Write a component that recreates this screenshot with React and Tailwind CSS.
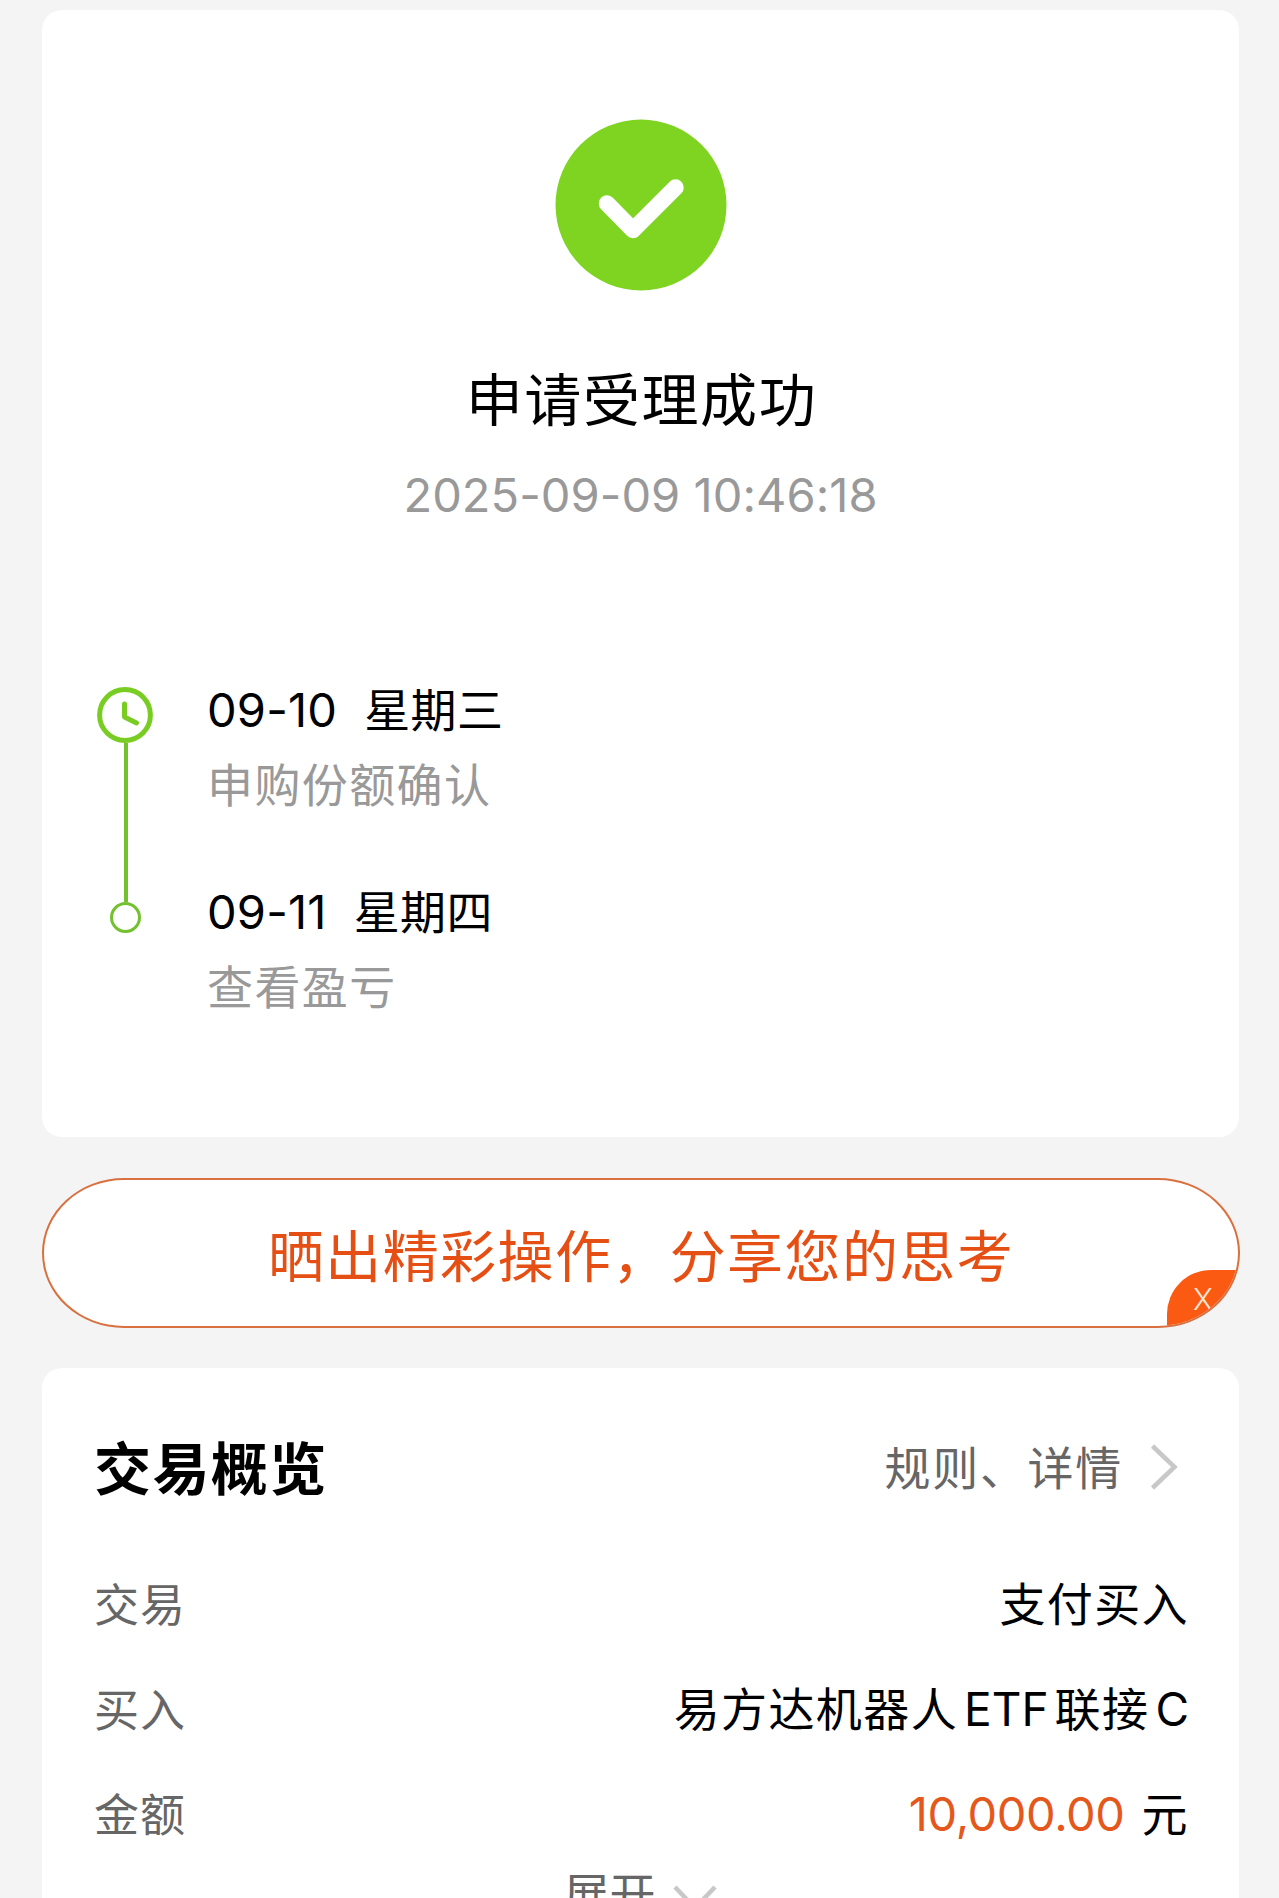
import React from "react";

const steps = [
  { date: "09-10", day: "星期三", label: "申购份额确认" },
  { date: "09-11", day: "星期四", label: "查看盈亏" },
];

const SuccessIcon = () => (
  <svg viewBox="0 0 172 172" className="w-[172px] h-[172px]" fill="none">
    <circle cx="86" cy="86" r="85.5" fill="#7ed421" />
    <path
      d="M52 84.500 L78 111 L120.500 68.500"
      stroke="#fff"
      strokeWidth="16.500"
      strokeLinecap="round"
      strokeLinejoin="round"
    />
  </svg>
);

const ClockIcon = () => (
  <svg viewBox="0 0 56 56" className="w-14 h-14 shrink-0" fill="none">
    <circle cx="28" cy="28" r="25.400" stroke="#79cd22" strokeWidth="5" />
    <path
      d="M27.500 17 V30 L39.500 36"
      stroke="#79cd22"
      strokeWidth="5"
      strokeLinecap="round"
      strokeLinejoin="round"
    />
  </svg>
);

const Row = ({ label, children }) => (
  <div className="-mr-[3px] flex h-[105px] items-center justify-between pt-0.5">
    <span className="pt-0.5 text-[45px] tracking-[1px] text-[#666]">{label}</span>
    <span className="flex items-center text-[46px] tracking-[1.4px] text-black">
      {children}
    </span>
  </div>
);

const App = () => {
  return (
    <div className="h-[1898px] w-[1279px] overflow-hidden bg-[#f4f4f4] pt-[10px] pl-[42px] font-['Inter','Noto_Sans_CJK_SC',sans-serif] whitespace-nowrap">
      {/* result */}
      <section className="flex h-[1127px] w-[1197px] flex-col items-center rounded-[20px] bg-white pt-[109px]">
        <SuccessIcon />
        <h1 className="mt-[70px] ml-0.5 h-20 text-[57px] leading-20 tracking-[1.6px] text-black">
          申请受理成功
        </h1>
        <p className="mt-6 h-[60px] text-[47px] leading-[60px] tracking-[0.050px] text-[#999]">
          2025-09-09 10:46:18
        </p>

        <div className="mt-[148px] flex w-full pl-[55px]">
          <div className="flex w-14 flex-col items-center pt-[14px]">
            <ClockIcon />
            <div className="ml-px h-[159px] w-1 bg-[#74c130]" />
            <div className="h-[31px] w-[31px] rounded-full border-3 border-[#74c130]" />
          </div>
          <div className="ml-[54px] flex flex-col">
            {steps.map((s) => (
              <div key={s.date} className="h-[202px]">
                <div className="flex h-[74px] items-center text-[46px]">
                  <span className="text-[47px] tracking-[0.200px]">{s.date}</span>
                  <span className="ml-[27px] tracking-[0.400px]">{s.day}</span>
                </div>
                <div className="flex h-[76px] items-center text-[46px] tracking-[1.4px] text-[#999]">
                  {s.label}
                </div>
              </div>
            ))}
          </div>
        </div>
      </section>

      {/* share banner */}
      <section className="relative mt-[41px] flex h-[150px] w-[1198px] items-center justify-center overflow-hidden rounded-[82px/75px] border-2 border-[#d9703f] bg-white">
        <span className="pt-[7px] text-[56px] tracking-[1.4px] text-[#e64f14]">
          晒出精彩操作，分享您的思考
        </span>
        <button className="absolute -right-0.5 -bottom-0.5 flex h-[58px] w-[73px] items-center rounded-tl-[44px] bg-[#fa5a12] pl-[26px] text-[30px] font-light text-[#ffe6d8]">
          X
        </button>
      </section>

      {/* overview */}
      <section className="mt-10 h-[600px] w-[1197px] rounded-[20px] bg-white pr-[53px] pl-[52px] pt-[47px]">
        <div className="mb-8 flex h-[104px] items-center justify-between">
          <h2 className="pt-[5px] text-[57px] font-bold tracking-[1.4px] text-black">
            交易概览
          </h2>
          <div className="flex items-center text-[46px] tracking-[1.7px] text-[#666]">
            <span className="pt-[3px]">规则、详情</span>
            <svg
              viewBox="0 0 28 46"
              className="mr-2 ml-[27px] h-[46px] w-7"
              fill="none"
            >
              <path d="M2.500 2 L24.500 23 L2.500 44" stroke="#c8c8c8" strokeWidth="4.500" />
            </svg>
          </div>
        </div>

        <Row label="交易">支付买入</Row>
        <Row label="买入">
          <span>易方达机器人</span>
          <span className="mx-1.5 tracking-[0px]">ETF</span>
          <span>联接</span>
          <span className="ml-1.5 tracking-[0px]">C</span>
        </Row>
        <Row label="金额">
          <span className="mr-[17px] text-[47px] tracking-[-0.4px] text-[#e4581c]">
            10,000.00
          </span>
          元
        </Row>

        <div className="flex h-[60px] items-start justify-center text-[46px] leading-[56px] text-[#666]">
          展开
          <svg viewBox="0 0 44 26" className="mt-[19px] ml-[17px] h-[26px] w-11" fill="none">
            <path d="M2 2 L22 23 L42 2" stroke="#c8c8c8" strokeWidth="4.500" />
          </svg>
        </div>
      </section>
    </div>
  );
};

export default App;
